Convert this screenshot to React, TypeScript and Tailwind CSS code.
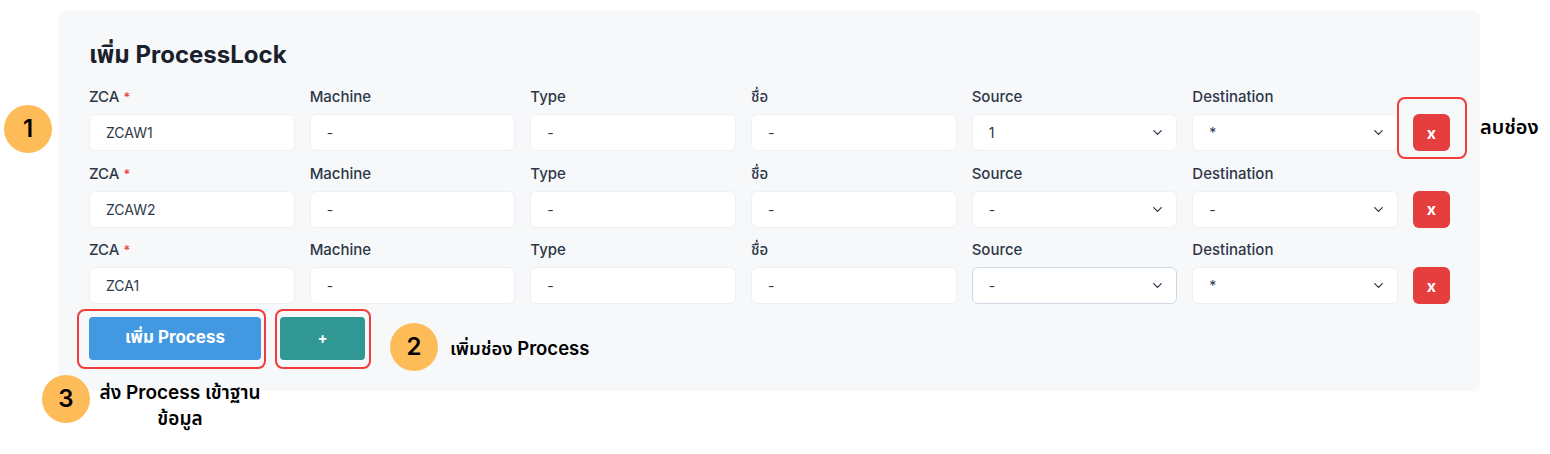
import { ChevronDown } from "lucide-react";

type Row = {
    zca: string;
    machine: string;
    type: string;
    name: string;
    source: string;
    destination: string;
    focusSource?: boolean;
};

const rows: Row[] = [
    { zca: "ZCAW1", machine: "-", type: "-", name: "-", source: "1", destination: "*" },
    { zca: "ZCAW2", machine: "-", type: "-", name: "-", source: "-", destination: "-" },
    { zca: "ZCA1", machine: "-", type: "-", name: "-", source: "-", destination: "*", focusSource: true },
];

const font = { fontFamily: 'Inter, "Noto Sans", "Noto Sans Thai", sans-serif' };

function Field({ label, required, children }: { label: string; required?: boolean; children: React.ReactNode }) {
    return (
        <div className="flex flex-col">
            <label className="h-5 mb-[7px] text-[15px] leading-5 font-medium text-[#2d3748]">
                {label}
                {required && <span className="text-[#e53e3e] ml-1 text-[13px]">*</span>}
            </label>
            {children}
        </div>
    );
}

function TextBox({ value }: { value: string }) {
    return (
        <div className="h-[37px] bg-white border border-[#edf0f4] rounded-md px-4 flex items-center text-[14px] text-[#2d3748]">
            {value}
        </div>
    );
}

function SelectBox({ value, focus }: { value: string; focus?: boolean }) {
    return (
        <div className={`h-[37px] bg-white border ${focus ? "border-[#cfd8e3]" : "border-[#edf0f4]"} rounded-md pl-4 pr-[11px] flex items-center justify-between text-[14px] text-[#2d3748]`}>
            <span>{value}</span>
            <ChevronDown size={15} strokeWidth={2} className="text-[#2d3748]" />
        </div>
    );
}

function Badge({ n, className }: { n: string; className: string }) {
    return (
        <div className={`absolute w-12 h-12 rounded-full bg-[#fdbc58] flex items-center justify-center text-[24px] font-semibold text-black ${className}`}>
            {n}
        </div>
    );
}

export default function App() {
    return (
        <div className="relative w-[1550px] h-[454px] bg-white overflow-hidden" style={font}>
            <div className="pl-[59px] pt-[10px]">
                <div className="w-[1421px] bg-[#f7f8fa] rounded-lg px-[30px] pt-[29px] pb-[31px]">
                    <h2 className="text-[24px] leading-8 font-bold text-[#1a202c] mb-[16px]">เพิ่ม ProcessLock</h2>

                    {rows.map((r, i) => (
                        <div key={i} className="grid grid-cols-[repeat(6,minmax(0,1fr))_37px] gap-x-[15px] mb-[12.5px] items-end">
                            <Field label="ZCA" required><TextBox value={r.zca} /></Field>
                            <Field label="Machine"><TextBox value={r.machine} /></Field>
                            <Field label="Type"><TextBox value={r.type} /></Field>
                            <Field label="ชื่อ"><TextBox value={r.name} /></Field>
                            <Field label="Source"><SelectBox value={r.source} focus={r.focusSource} /></Field>
                            <Field label="Destination"><SelectBox value={r.destination} /></Field>
                            <button className="h-[37px] w-[37px] rounded-md bg-[#e53e3e] text-white font-bold text-[16px] flex items-center justify-center">
                                x
                            </button>
                        </div>
                    ))}

                    <div className="flex gap-[19px] mt-[1px]">
                        <button className="h-[43px] w-[172px] rounded bg-[#4299e1] text-white font-bold text-[17px]">
                            เพิ่ม Process
                        </button>
                        <button className="h-[43px] w-[85px] rounded bg-[#319795] text-white font-bold text-[15px]">
                            +
                        </button>
                    </div>
                </div>
            </div>

            {/* annotations */}
            <div className="absolute left-[1397px] top-[97px] w-[70px] h-[62px] border-2 border-[#f23c3c] rounded-lg" />
            <div className="absolute left-[77px] top-[309px] w-[189px] h-[60px] border-2 border-[#f23c3c] rounded-lg" />
            <div className="absolute left-[275px] top-[309px] w-[96px] h-[60px] border-2 border-[#f23c3c] rounded-lg" />

            <Badge n="1" className="left-[4px] top-[105px]" />
            <Badge n="2" className="left-[390px] top-[323px]" />
            <Badge n="3" className="left-[42px] top-[375px]" />

            <div className="absolute left-[1480px] top-[115px] text-[20px] font-semibold text-black leading-6">ลบช่อง</div>
            <div className="absolute left-[450px] top-[336px] text-[18.5px] font-semibold text-black leading-6">เพิ่มช่อง Process</div>
            <div className="absolute left-[94px] top-[380px] w-[172px] text-center text-[19px] font-semibold text-black leading-[26px]">
                ส่ง Process เข้าฐาน<br />ข้อมูล
            </div>
        </div>
    );
}
